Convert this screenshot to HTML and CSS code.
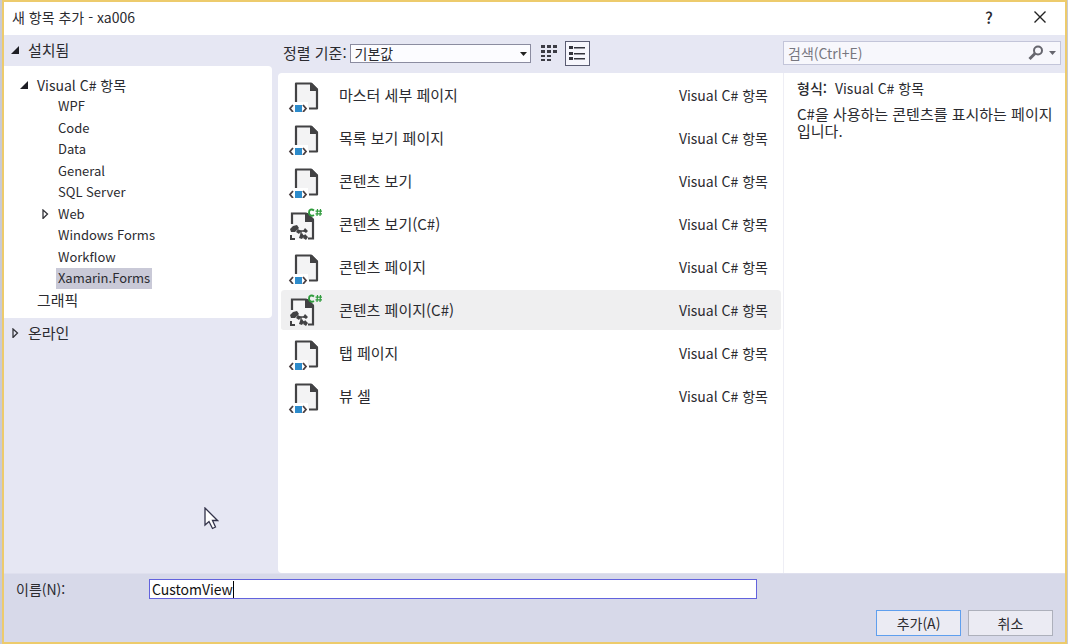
FILE: index.html
```html
<!DOCTYPE html>
<html lang="ko">
<head>
<meta charset="utf-8">
<title>새 항목 추가 - xa006</title>
<link rel="stylesheet" href="styles.css">
</head>
<body>
<svg width="0" height="0" class="defs" aria-hidden="true">
  <symbol id="xaml" viewBox="0 0 34 34">
    <path d="M8 5H23L29 11V30H20V24H8Z" fill="#f3f3f4"/>
    <path d="M8 24V5.500H23L29 11.500V30.500H21" fill="none" stroke="#424244" stroke-width="2.200" stroke-linejoin="round"/>
    <path d="M22 5V13H30V11L24 5Z" fill="#424244"/>
    <path d="M5 27L2 30.500L5 34M15 27L18 30.500L15 34" fill="none" stroke="#4a3f42" stroke-width="1.800"/>
    <path d="M7 27H14V34H7Z" fill="#2d8bcb"/>
  </symbol>
  <symbol id="csharp" viewBox="0 0 34 34">
    <path d="M3 5H18L26 13V32H3Z" fill="#f6f6f7"/>
    <path d="M4 17V6.500H18L25 13V31.500H20" fill="none" stroke="#424244" stroke-width="2.200"/>
    <path d="M17 6H20L26 12V15H17Z" fill="#424244"/>
    <path d="M5 19L9 18L11 21L7 25L3 25L2 22ZM12 28L14 26L16 29L14 32L11 31ZM10 22L13 24L11 27L8 25ZM17 21L20 24L18 26L15 24ZM17 27L20 30L18 33L15 31ZM2 28H4V31H7V33H2Z" fill="#424244"/>
    <path d="M11 24H17M13 24V29H17" fill="none" stroke="#424244" stroke-width="1.400"/>
    <path d="M26 3.500C23.500 1.500 21 2.500 21 5.500S23.500 9.500 26 8" fill="none" stroke="#2f9b3c" stroke-width="1.900"/>
    <path d="M29.500 2L29 9M32.500 2L32 9M27.500 4.200H34M27.500 6.800H34" stroke="#2f9b3c" stroke-width="1.200"/>
  </symbol>
  <symbol id="open" viewBox="0 0 10 10"><path d="M9 1V9H1Z" fill="#1e1e24"/></symbol>
  <symbol id="closed" viewBox="0 0 10 10"><path d="M3 1L7.500 5L3 9.500Z" fill="none" stroke="#333339" stroke-width="1.300"/></symbol>
</svg>
<div class="window">
  <header class="title">
    <h1>새 항목 추가 - xa006</h1>
    <button class="sys help" aria-label="도움말">?</button>
    <button class="sys" aria-label="닫기"><svg width="14" height="14" viewBox="0 0 14 14"><path d="M1.500 1.500L12.500 12.500M12.500 1.500L1.500 12.500" stroke="#222" stroke-width="1.400"/></svg></button>
  </header>
  <div class="body">
    <nav class="side">
      <button class="group"><svg class="tri"><use href="#open"/></svg>설치됨</button>
      <div class="tree">
        <button class="node top"><svg class="tri"><use href="#open"/></svg>Visual C# 항목</button>
        <button class="node">WPF</button>
        <button class="node">Code</button>
        <button class="node">Data</button>
        <button class="node">General</button>
        <button class="node">SQL Server</button>
        <button class="node parent"><svg class="tri"><use href="#closed"/></svg>Web</button>
        <button class="node">Windows Forms</button>
        <button class="node">Workflow</button>
        <button class="node chosen"><span>Xamarin.Forms</span></button>
        <button class="node last">그래픽</button>
      </div>
      <button class="group"><svg class="tri"><use href="#closed"/></svg>온라인</button>
    </nav>
    <main class="main">
      <div class="bar">
        <label for="sort">정렬 기준:</label>
        <div class="pick">
          <select id="sort"><option>기본값</option></select>
          <svg width="7" height="4" viewBox="0 0 7 4"><path d="M0 0H7L3.500 4Z" fill="#222"/></svg>
        </div>
        <button class="view" aria-label="작은 아이콘"><svg width="16" height="18" viewBox="0 0 16 18"><path d="M0 1H4V4H0ZM6 1H10V4H6ZM12 1H16V4H12ZM0 6H4V9H0ZM6 6H10V9H6ZM12 6H16V9H12ZM0 11H4V13H0ZM6 11H10V13H6ZM0 15H4V17H0ZM6 15H10V17H6Z" fill="#3c3c44"/></svg></button>
        <button class="view on" aria-label="목록"><svg width="18" height="18" viewBox="0 0 18 18"><path d="M1 2H5V5H1ZM1 8H5V11H1ZM1 13H5V16H1ZM6 3H17V4.500H6ZM6 9H17V10.500H6ZM6 14H17V15.500H6Z" fill="#34343c"/></svg></button>
        <div class="search">
          <input type="text" placeholder="검색(Ctrl+E)" aria-label="검색">
          <svg width="16" height="16" viewBox="0 0 16 16"><circle cx="10" cy="5.500" r="4" fill="none" stroke="#66666e" stroke-width="2"/><path d="M7 8.500L1.500 14" stroke="#66666e" stroke-width="3"/></svg>
          <svg width="7" height="4" viewBox="0 0 7 4"><path d="M0 0H7L3.500 4Z" fill="#66666e"/></svg>
        </div>
      </div>
      <div class="content">
        <div class="list">
          <button class="item"><svg class="ico"><use href="#xaml"/></svg><span class="name">마스터 세부 페이지</span><span>Visual C# 항목</span></button>
          <button class="item"><svg class="ico"><use href="#xaml"/></svg><span class="name">목록 보기 페이지</span><span>Visual C# 항목</span></button>
          <button class="item"><svg class="ico"><use href="#xaml"/></svg><span class="name">콘텐츠 보기</span><span>Visual C# 항목</span></button>
          <button class="item"><svg class="ico"><use href="#csharp"/></svg><span class="name">콘텐츠 보기(C#)</span><span>Visual C# 항목</span></button>
          <button class="item"><svg class="ico"><use href="#xaml"/></svg><span class="name">콘텐츠 페이지</span><span>Visual C# 항목</span></button>
          <button class="item selected"><svg class="ico"><use href="#csharp"/></svg><span class="name">콘텐츠 페이지(C#)</span><span>Visual C# 항목</span></button>
          <button class="item"><svg class="ico"><use href="#xaml"/></svg><span class="name">탭 페이지</span><span>Visual C# 항목</span></button>
          <button class="item"><svg class="ico"><use href="#xaml"/></svg><span class="name">뷰 셀</span><span>Visual C# 항목</span></button>
        </div>
        <aside class="info">
          <p><b>형식:</b>Visual C# 항목</p>
          <p class="desc">C#을 사용하는 콘텐츠를 표시하는 페이지입니다.</p>
        </aside>
      </div>
    </main>
  </div>
  <footer class="foot">
    <div class="field">
      <label for="name">이름(N):</label>
      <div class="namebox"><input id="name" type="text" value="CustomView"><i class="caret"></i></div>
    </div>
    <div class="actions">
      <button class="act primary">추가(A)</button>
      <button class="act">취소</button>
    </div>
  </footer>
</div>
<svg class="pointer" width="15" height="24" viewBox="0 0 15 24" aria-hidden="true"><path d="M1 1V18L5 14.500L8.500 21.500L11.500 20L8.500 13.500H13.500Z" fill="#fff" stroke="#33334a" stroke-width="1.300"/></svg>
</body>
</html>
```
FILE: styles.css
```css
* { box-sizing: border-box; }
body {
  margin: 0;
  background: #c9cad6;
  color: #2b2b30;
  font: 14px/20px "Noto Sans CJK KR", sans-serif;
}
button, input, select { font: inherit; color: inherit; }
button { border: 0; padding: 0; background: none; text-align: left; }
h1, p { margin: 0; }
.defs { position: absolute; }
.window {
  display: flex;
  flex-direction: column;
  min-height: 100vh;
  margin: 0 1px 0 2px;
  border: 2px solid #edcb6c;
  background: #e6e7f3;
}
.title { display: flex; align-items: center; height: 33px; padding: 0 15px 4px 8px; background: #fff; }
.title h1 { flex: 1; font-size: 14px; font-weight: 400; }
.sys { display: flex; align-items: center; justify-content: center; width: 20px; height: 24px; margin-left: 31px; }
.help { font-size: 16px; font-weight: 500; }
.body { flex: 1; display: flex; gap: 6px; }
.side { width: 268px; }
.group { display: flex; align-items: center; width: 100%; height: 31px; padding: 0 0 2px 6px; gap: 8px; font-size: 15px; }
.tri { width: 10px; height: 10px; flex: none; }
.tree { padding: 8px 0; background: #fff; border-radius: 0 4px 4px 0; }
.node { display: flex; align-items: center; width: 100%; height: 21px; padding-left: 54px; font-size: 13px; }
.node:nth-child(even) { height: 22px; }
.node.top { padding-left: 15px; gap: 8px; font-size: 14px; }
.node.parent { padding-left: 36px; gap: 8px; }
.node.last { padding-left: 33px; font-size: 15px; }
.node.chosen { padding-left: 52px; height: 22px; }
.chosen span { height: 21px; padding: 0 2px; background: #c9c9d7; }
.main { flex: 1; display: flex; flex-direction: column; min-width: 0; }
.bar { display: flex; align-items: center; height: 38px; padding: 0 4px 2px 5px; }
.bar label { font-size: 15px; margin-right: 3px; }
.pick { position: relative; width: 181px; height: 19px; }
.pick select {
  display: block;
  appearance: none;
  width: 100%;
  height: 19px;
  padding: 0 4px;
  border: 1px solid #8b8ca0;
  border-radius: 0;
  background: #fcfcff;
  line-height: 17px;
}
.pick svg { position: absolute; right: 4px; top: 8px; pointer-events: none; }
.view { display: flex; align-items: center; justify-content: center; width: 25px; height: 25px; margin-left: 6px; }
.view.on { margin-left: 3px; border: 1px solid #5a5c72; background: #f6f6fc; }
.search { display: flex; align-items: center; gap: 5px; width: 278px; height: 24px; margin-left: auto; padding: 0 4px; border: 1px solid #c3c5d9; background: #f7f7fc; }
.search input { flex: 1; min-width: 0; padding: 0; border: 0; background: none; outline: 0; }
.search input::placeholder { color: #77777f; opacity: 1; }
.content { flex: 1; display: flex; background: #fff; border-radius: 4px 0 0 4px; }
.list { flex: 1; min-width: 0; padding: 1px 2px 0 3px; }
.item { display: flex; align-items: center; width: 100%; height: 43px; padding: 0 13px 0 7px; border: solid transparent; border-width: 1px 0 2px; border-radius: 4px; background-clip: padding-box; }
.item.selected { background-color: #efeff0; }
.ico { width: 34px; height: 34px; margin-right: 17px; }
.name { flex: 1; font-size: 15px; }
.info { width: 282px; padding: 5px 6px 0 13px; border-left: 1px solid #eeeef5; }
.info b { margin-right: 8px; font-weight: 500; }
.desc { margin-top: 7px; line-height: 17px; font-size: 15px; }
.foot { padding: 5px 12px 6px; border-top: 1px solid #dfe0ee; background: #d7d9e9; }
.field { display: flex; align-items: center; height: 20px; }
.field label { width: 133px; }
.namebox { display: flex; align-items: center; flex: 0 1 608px; height: 20px; padding-left: 2px; border: 1px solid #6262dd; background: #fff; }
.namebox input { field-sizing: content; height: 18px; padding: 0; border: 0; outline: 0; background: none; line-height: 18px; color: #111; }
.caret { width: 1px; height: 17px; background: #000; }
.actions { display: flex; justify-content: flex-end; gap: 7px; margin-top: 11px; }
.act { width: 85px; height: 26px; border: 1px solid #adb0bb; background: #ebebf3; text-align: center; line-height: 22px; }
.primary { border-color: #5f9fee; }
.pointer { position: absolute; left: 204px; top: 507px; }
```
